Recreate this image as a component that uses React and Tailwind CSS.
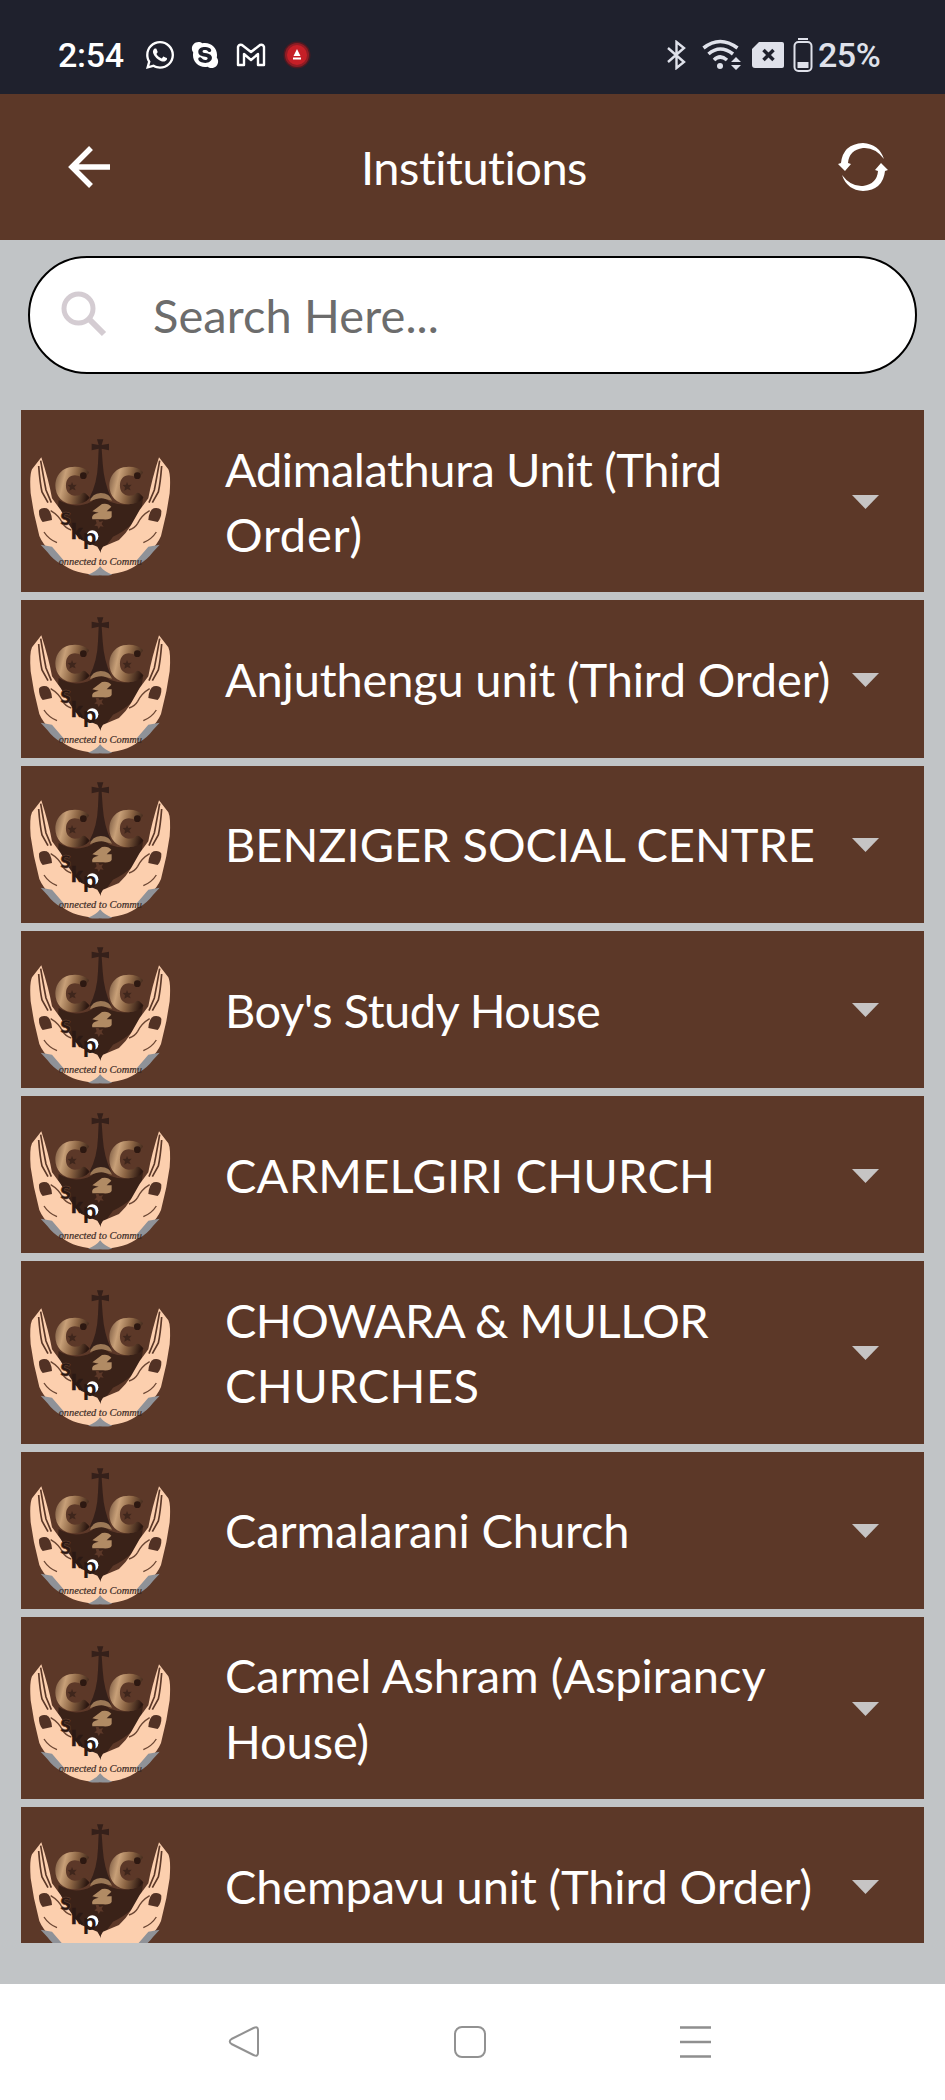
import { FaWhatsapp, FaSkype } from "react-icons/fa";

const rows = [
  { tall: true, lines: [["Adimalathura Unit (Third", "tracking-[-0.42px]"], ["Order)", "tracking-[0.75px]"]] },
  { lines: [["Anjuthengu unit (Third Order)", "tracking-[-0.17px]"]] },
  { lines: [["BENZIGER SOCIAL CENTRE", "tracking-[-0.04px]"]] },
  { lines: [["Boy's Study House", "tracking-[-0.5px]"]] },
  { lines: [["CARMELGIRI CHURCH", "tracking-[0.22px]"]] },
  { tall: true, lines: [["CHOWARA & MULLOR", "tracking-[-0.56px]"], ["CHURCHES", "tracking-[0.45px]"]] },
  { lines: [["Carmalarani Church", "tracking-[-0.12px]"]] },
  { tall: true, lines: [["Carmel Ashram (Aspirancy", "tracking-[-0.03px]"], ["House)", "tracking-[-0.1px]"]] },
  { lines: [["Chempavu unit (Third Order)", "tracking-[-0.13px]"]] },
];

function Hand() {
  return (
    <g>
      <path d="M40 82 L12 118 Q4 134 8 190 L18 250 L34 318 Q44 342 70 368 L100 400 Q140 434 217 435 V365 L208 350 L160 330 Q138 310 124 286 L98 240 L72 205 Q62 150 40 82Z" fill="#fccfae" />
      <path d="M38 344 L72 350 L108 392 L100 403 Q76 390 58 366Z" fill="#8f9298" />
      <path d="M217 408 Q206 424 180 434 Q198 438 217 436Z" fill="#8f9298" />
      <path d="M38 92 Q48 150 54 180 L70 218 M32 108 Q36 160 42 186 L60 218" fill="none" stroke="#5c3828" strokeWidth="5" />
      <path d="M33 242 Q38 232 56 235 Q70 242 72 270 L44 276 Q32 262 33 242Z" fill="#523225" />
      <path d="M68 242 Q92 256 104 280 Q112 294 130 300 M48 306 Q62 328 87 338" fill="none" stroke="#6b4633" strokeWidth="4" />
    </g>
  );
}

function Emblem() {
  return (
    <svg viewBox="0 0 450 450" className="mt-2 ml-[7px] size-[150px] shrink-0">
      <defs>
        <linearGradient id="gold" x1="0" y1="0.2" x2="1" y2="0.6">
          <stop offset="0" stopColor="#70503a" />
          <stop offset="0.3" stopColor="#c8a078" />
          <stop offset="0.6" stopColor="#8c6544" />
          <stop offset="1" stopColor="#2d1811" />
        </linearGradient>
      </defs>
      <path d="M92 210 Q140 240 190 215 Q216 190 245 215 Q300 236 345 206 L340 240 Q320 290 255 320 L217 372 L150 330 L90 235Z" fill="#3a2218" />
      <path d="M207 28 H226 L221 45 L243 41 V61 L221 56 L224 100 Q228 160 250 205 H184 Q208 160 210 100 L212 56 L191 61 V41 L212 45Z" fill="#35201a" />
      <Hand />
      <g transform="translate(433 0) scale(-1 1)"><Hand /></g>
      <g fontFamily="Lato, sans-serif" fontWeight="900">
        <text x="81" y="220" fontSize="144" textLength="100" lengthAdjust="spacingAndGlyphs" fill="url(#gold)" stroke="url(#gold)" strokeWidth="8" strokeLinejoin="round">C</text>
        <text x="243" y="220" fontSize="144" textLength="100" lengthAdjust="spacingAndGlyphs" fill="url(#gold)" stroke="url(#gold)" strokeWidth="8" strokeLinejoin="round">C</text>
      </g>
      <circle cx="166" cy="137" r="10" fill="#2d1811" />
      <circle cx="328" cy="137" r="10" fill="#2d1811" />
      <path d="M186 214 Q192 190 218 189 Q246 190 252 212 L232 207 Q216 200 186 214Z" fill="#9b7856" />
      <path d="M193 244 L222 222 Q240 218 250 230 L236 244 H251 V260 Q248 270 225 268 H193 Q188 252 212 248Z" fill="#b18b64" />
      <path d="M210 268 l5 8 10-3-4 9 6 8-10-1-5 8-4-9-9-1 7-7-3-9z" fill="#5c3828" />
      <path d="M132 156 l4 9 10-1-7 8 4 9-10-4-9 5 2-10-7-7 10-1zM297 156 l4 9 10-1-7 8 4 9-10-4-9 5 2-10-7-7 10-1z" fill="#3f261c" />
      <circle cx="193" cy="319" r="18" fill="#fff" />
      <path d="M213 345 L217 370 L222 345Z" fill="#3a2218" />
      <g fontFamily="Lato, sans-serif" fontWeight="900" fill="#2b1914">
        <text x="97" y="285" fontSize="74" stroke="#6b4633" strokeWidth="1.500">s</text>
        <text x="130" y="328" fontSize="62" stroke="#2b1914" strokeWidth="2">k</text>
        <text x="165" y="344" fontSize="70">p</text>
      </g>
      <text x="92" y="406" fontFamily="Liberation Serif, serif" fontStyle="italic" fontSize="32" textLength="250" lengthAdjust="spacingAndGlyphs" fill="#3b2a25" stroke="#3b2a25" strokeWidth="0.600">onnected to Commu</text>
    </svg>
  );
}

function StatusBar() {
  return (
    <div className="flex h-[94px] items-center bg-[#1f212d] pt-4 pr-[64px] pl-[58px] font-[Roboto,sans-serif] text-[34px] font-medium text-white">
      <span className="w-[68px] tracking-[-0.3px]">2:54</span>
      <FaWhatsapp className="ml-[18px] size-[32px]" />
      <FaSkype className="ml-[14px] size-[30px]" />
      <svg viewBox="0 0 30 24" className="ml-[16px] h-[24px] w-[30px]" fill="none" stroke="#fff" strokeWidth="2.400" strokeLinejoin="round">
        <path d="M2 4 Q3 1 6 2 L15 9 L24 2 Q27 1 28 4 V22 H22 V11 L15 17 L8 11 V22 H2Z" />
      </svg>
      <svg viewBox="0 0 28 28" className="ml-[17px] size-[28px]">
        <circle cx="14" cy="14" r="13.500" fill="#4b1a22" />
        <circle cx="14" cy="14" r="12" fill="#8f1c24" />
        <circle cx="14" cy="14" r="10" fill="#c51f27" />
        <path d="M14 8 L17.500 15 H10.500Z M10 16.500 H18 V18.500 H10Z" fill="#fff" />
      </svg>
      <div className="ml-auto flex items-center text-[#dfe1ea]">
        <svg viewBox="0 0 20 30" className="h-[30px] w-[20px]" fill="none" stroke="currentColor" strokeWidth="2.400">
          <path d="M1 8 L17 22 L9.500 28 V2 L17 8 L1 22" />
        </svg>
        <svg viewBox="0 0 40 32" className="ml-[15px] h-[32px] w-[40px]" fill="none" stroke="currentColor" strokeWidth="3.600">
          <path d="M1.500 9 Q18 -4 35.500 9 M6.500 15 Q18 5 31 15 M12 21 Q18 15 25 21" />
          <circle cx="18" cy="27" r="3" fill="currentColor" stroke="none" />
          <path d="M34 18 L39 23 H29Z M34 31 L39 26 H29Z" fill="currentColor" stroke="none" />
        </svg>
        <svg viewBox="0 0 32 26" className="ml-[10px] h-[26px] w-[32px]">
          <path d="M7 0 H30 Q32 0 32 2 V24 Q32 26 30 26 H3 Q0 26 0 23 V7Z" fill="currentColor" />
          <path d="M11.500 8 L21.500 18 M21.500 8 L11.500 18" stroke="#1f212d" strokeWidth="3.500" />
        </svg>
        <svg viewBox="0 0 20 36" className="ml-[9px] h-[36px] w-[20px]" fill="none" stroke="currentColor" strokeWidth="2">
          <path d="M5 2 H15" /><rect x="1.500" y="5" width="17" height="29" rx="4" />
          <path d="M4.500 25 H15.500 V31 H4.500Z" fill="currentColor" stroke="none" />
        </svg>
        <span className="ml-[5px] w-[63px] tracking-[-0.5px]">25%</span>
      </div>
    </div>
  );
}

export default function App() {
  return (
    <div className="flex h-[2100px] w-[945px] flex-col overflow-hidden bg-[#c1c4c6] font-[Lato,sans-serif] [font-variant-ligatures:none]">
      <StatusBar />
      <header className="flex h-[146px] items-center bg-[#5c3828] text-white">
        <svg viewBox="0 0 42 42" className="ml-[68px] size-[42px]" fill="none" stroke="currentColor" strokeWidth="5.500">
          <path d="M42 21 H5 M23 2 L4 21 L23 40" />
        </svg>
        <h1 className="flex-1 text-center text-[47px] tracking-[-0.5px]">Institutions</h1>
        <svg viewBox="0 0 50 50" className="mr-[57px] size-[50px]" fill="currentColor">
          <path d="M0 22 L3 21 Q5 2 25 1 Q41 2 46 17 Q37 5 25 6 Q11 8 10 21 L13 22 L7 29Z" />
          <path d="M50 28 L47 29 Q45 48 25 49 Q9 48 4 33 Q13 45 25 44 Q39 42 40 29 L37 28 L43 21Z" />
        </svg>
      </header>
      <div className="mt-4 ml-7 flex h-[118px] w-[889px] items-center rounded-full border-2 border-black bg-white">
        <svg viewBox="0 0 46 46" className="mb-1 ml-[31px] size-[46px] translate-y-px" fill="none" stroke="#d4ccd2">
          <circle cx="17.500" cy="17.500" r="14.500" strokeWidth="5" /><path d="M28 28 L43 43" strokeWidth="6" />
        </svg>
        <span className="ml-[46px] pt-px text-[47px] tracking-[0.1px] text-[#6c6c6c]">Search Here...</span>
      </div>
      <main className="mt-9 ml-[21px] flex h-[1533px] w-[903px] flex-col gap-2 overflow-hidden">
        {rows.map((row) => (
          <section key={row.lines[0][0]} className={`flex shrink-0 items-center overflow-hidden bg-[#5c3828] ${row.tall ? "h-[182.250px]" : "h-[157.250px]"}`}>
            <Emblem />
            <div className="ml-[47px] flex-1 pt-[2px] text-[47px] leading-[65.500px] whitespace-nowrap text-white">
              {row.lines.map(([text, tracking]) => (
                <div key={text} className={tracking}>{text}</div>
              ))}
            </div>
            <svg viewBox="0 0 27 14" className="mt-[2px] mr-[45px] h-[14px] w-[27px]"><path d="M0 0 H27 L13.500 14Z" fill="#c6c4c4" /></svg>
          </section>
        ))}
      </main>
      <nav className="mt-[41px] flex h-[116px] shrink-0 items-center gap-[194px] bg-white pl-[228px]">
        <svg viewBox="0 0 32 32" className="size-8" fill="none" stroke="#929292" strokeWidth="2" strokeLinejoin="round">
          <path d="M25.500 2 Q30 0 30 4 V27 Q30 31 25.500 29 L3.500 18 Q0 15.500 3.500 13Z" />
        </svg>
        <svg viewBox="0 0 32 32" className="size-8" fill="none" stroke="#929292" strokeWidth="2">
          <rect x="1" y="1" width="30" height="30" rx="7" />
        </svg>
        <svg viewBox="0 0 32 32" className="size-8" fill="none" stroke="#8f8f8f" strokeWidth="2.500">
          <path d="M0 1.500 H31 M0 16 H31 M0 30.500 H31" />
        </svg>
      </nav>
    </div>
  );
}
